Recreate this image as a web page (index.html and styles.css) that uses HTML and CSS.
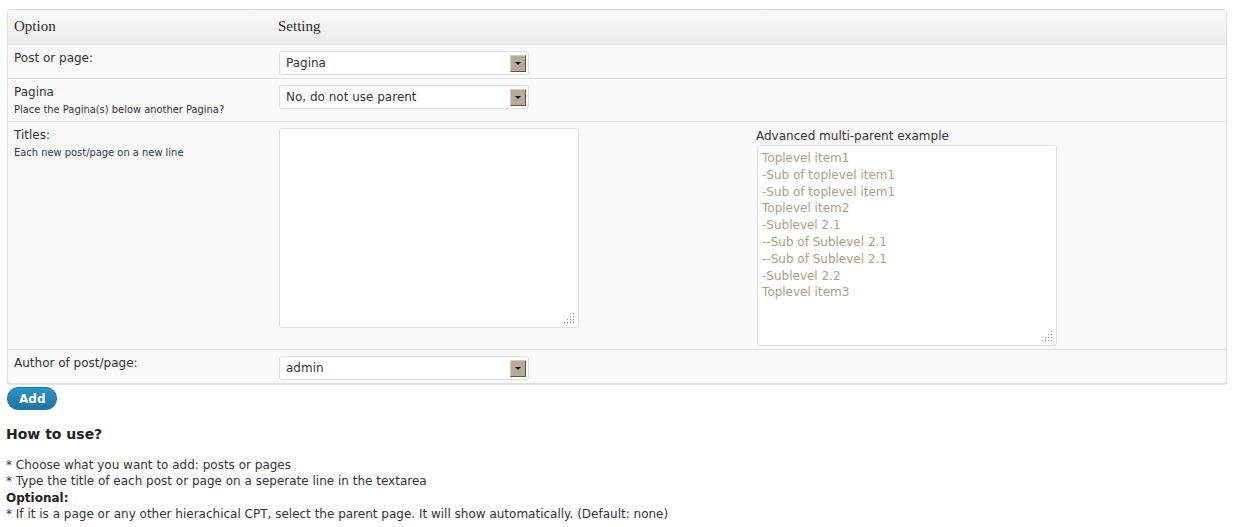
FILE: index.html
```html
<!DOCTYPE html>
<html>
<head>
<meta charset="utf-8">
<link rel="stylesheet" href="styles.css">
</head>
<body>
<div class="wrap">
  <table class="widefat">
    <thead>
      <tr><th class="col-opt">Option</th><th>Setting</th></tr>
    </thead>
    <tbody>
      <tr>
        <td class="label">Post or page:</td>
        <td><div class="select"><span class="val">Pagina</span><span class="arrow"></span></div></td>
      </tr>
      <tr>
        <td class="label">Pagina<span class="desc">Place the Pagina(s) below another Pagina?</span></td>
        <td><div class="select"><span class="val">No, do not use parent</span><span class="arrow"></span></div></td>
      </tr>
      <tr>
        <td class="label">Titles:<span class="desc desc-blue">Each new post/page on a new line</span></td>
        <td>
          <div class="titles-grid">
            <div class="ta-wrap">
              <textarea class="ta"></textarea>
              <span class="grip"></span>
            </div>
            <div class="example">
              <div class="ex-label">Advanced multi-parent example</div>
              <div class="ta-wrap">
                <textarea class="ta ta-ex" readonly>Toplevel item1
-Sub of toplevel item1
-Sub of toplevel item1
Toplevel item2
-Sublevel 2.1
--Sub of Sublevel 2.1
--Sub of Sublevel 2.1
-Sublevel 2.2
Toplevel item3</textarea>
                <span class="grip"></span>
              </div>
            </div>
          </div>
        </td>
      </tr>
      <tr class="last">
        <td class="label">Author of post/page:</td>
        <td><div class="select"><span class="val">admin</span><span class="arrow"></span></div></td>
      </tr>
    </tbody>
  </table>
  <button class="btn-primary">Add</button>
  <h3 class="howto">How to use?</h3>
  <p class="help">* Choose what you want to add: posts or pages<br>* Type the title of each post or page on a seperate line in the textarea<br><strong>Optional:</strong><br>* If it is a page or any other hierachical CPT, select the parent page. It will show automatically. (Default: none)</p>
</div>
</body>
</html>
```

FILE: styles.css
```css
html, body {
  margin: 0;
  padding: 0;
  background: #fff;
}
.wrap {
  padding: 9px 13px 0 7px;
  font-family: "DejaVu Sans", sans-serif;
  font-size: 12px;
  color: #333;
}
.widefat {
  width: 100%;
  border-collapse: separate;
  border-spacing: 0;
  border: 1px solid #dfdfdf;
  border-radius: 3px;
  background: #f9f9f9;
  box-shadow: 0 1px 0 #e4e4e4;
}
.widefat th {
  font-family: "Liberation Serif", serif;
  font-size: 15px;
  font-weight: normal;
  color: #2b2b2b;
  text-align: left;
  line-height: 19px;
  padding: 7px 7px 8px;
  background: linear-gradient(to bottom, #f9f9f9, #ececec);
  border-bottom: 1px solid #dfdfdf;
}
.widefat th.col-opt {
  width: 250px;
  padding-left: 6px;
}
.widefat td {
  vertical-align: top;
  padding: 5px 7px 3px;
  border-top: 1px solid #fff;
  border-bottom: 1px solid #dfdfdf;
}
.widefat td.label {
  padding-left: 6px;
}
.widefat tr.last td {
  border-bottom: none;
}
.label {
  line-height: 15px;
  color: #333;
}
.desc {
  display: block;
  margin-top: 2px;
  line-height: 16px;
  font-family: "DejaVu Sans Condensed", "DejaVu Sans", sans-serif;
  font-size: 11px;
  color: #333;
}
.desc-blue {
  color: #2a3a4f;
}
.select {
  box-sizing: border-box;
  width: 250px;
  height: 24px;
  margin-left: 1px;
  background: #fff;
  border: 1px solid #dfdfdf;
  border-radius: 3px;
  display: flex;
  align-items: center;
  justify-content: space-between;
  padding: 0 1px 0 6px;
  color: #333;
}
.val {
  line-height: 20px;
}
.arrow {
  position: relative;
  box-sizing: border-box;
  width: 16px;
  height: 17px;
  margin-right: 1px;
  background: #b6ab9a;
  border-top: 1px solid #d4ccbf;
  border-left: 1px solid #d4ccbf;
  border-right: 1px solid #5e564b;
  border-bottom: 1px solid #5e564b;
}
.arrow::after {
  content: "";
  position: absolute;
  left: 4px;
  top: 6px;
  border-left: 3px solid transparent;
  border-right: 3px solid transparent;
  border-top: 3px solid #111;
}
.titles-grid {
  display: grid;
  grid-template-columns: 478px 300px;
  align-items: start;
}
.ta-wrap {
  position: relative;
  width: 301px;
}
.ta {
  box-sizing: border-box;
  width: 300px;
  height: 200px;
  margin: 0 0 0 1px;
  display: block;
  background: #fff;
  border: 1px solid #dfdfdf;
  border-radius: 3px;
  padding: 2px 4px;
  font-family: "DejaVu Sans", sans-serif;
  font-size: 12px;
  line-height: 16.8px;
  color: #333;
  outline: none;
  resize: none;
}
.ta-ex {
  height: 201px;
  padding-top: 4px;
  color: #ab9e8a;
  overflow: hidden;
}
.grip {
  position: absolute;
  right: 5px;
  bottom: 5px;
  width: 10px;
  height: 10px;
  background:
    radial-gradient(circle, #8a8a8a 0.6px, transparent 0.9px) 9px 0 / 1px 1px no-repeat,
    radial-gradient(circle, #8a8a8a 0.6px, transparent 0.9px) 9px 3px / 1px 1px no-repeat,
    radial-gradient(circle, #8a8a8a 0.6px, transparent 0.9px) 6px 3px / 1px 1px no-repeat,
    radial-gradient(circle, #8a8a8a 0.6px, transparent 0.9px) 9px 6px / 1px 1px no-repeat,
    radial-gradient(circle, #8a8a8a 0.6px, transparent 0.9px) 6px 6px / 1px 1px no-repeat,
    radial-gradient(circle, #8a8a8a 0.6px, transparent 0.9px) 3px 6px / 1px 1px no-repeat,
    radial-gradient(circle, #8a8a8a 0.6px, transparent 0.9px) 9px 9px / 1px 1px no-repeat,
    radial-gradient(circle, #8a8a8a 0.6px, transparent 0.9px) 6px 9px / 1px 1px no-repeat,
    radial-gradient(circle, #8a8a8a 0.6px, transparent 0.9px) 3px 9px / 1px 1px no-repeat,
    radial-gradient(circle, #8a8a8a 0.6px, transparent 0.9px) 0 9px / 1px 1px no-repeat;
}
.ex-label {
  line-height: 17px;
  color: #333;
}
.btn-primary {
  display: block;
  margin-top: 3px;
  height: 23px;
  padding: 0 11px;
  border: 1px solid #21759b;
  border-radius: 11px;
  background: linear-gradient(to bottom, #2a95c5, #21759b);
  color: #fff;
  font-family: "DejaVu Sans", sans-serif;
  font-weight: bold;
  font-size: 12px;
  line-height: 20px;
  cursor: pointer;
}
.howto {
  margin: 15px 0 0 -1px;
  font-family: "DejaVu Sans", sans-serif;
  font-size: 14px;
  font-weight: bold;
  line-height: 18px;
  color: #222;
}
.help {
  margin: 14px 0 0 -1px;
  font-family: "DejaVu Sans", sans-serif;
  font-size: 12px;
  line-height: 16.3px;
  color: #333;
}
.help strong {
  color: #222;
}
```
